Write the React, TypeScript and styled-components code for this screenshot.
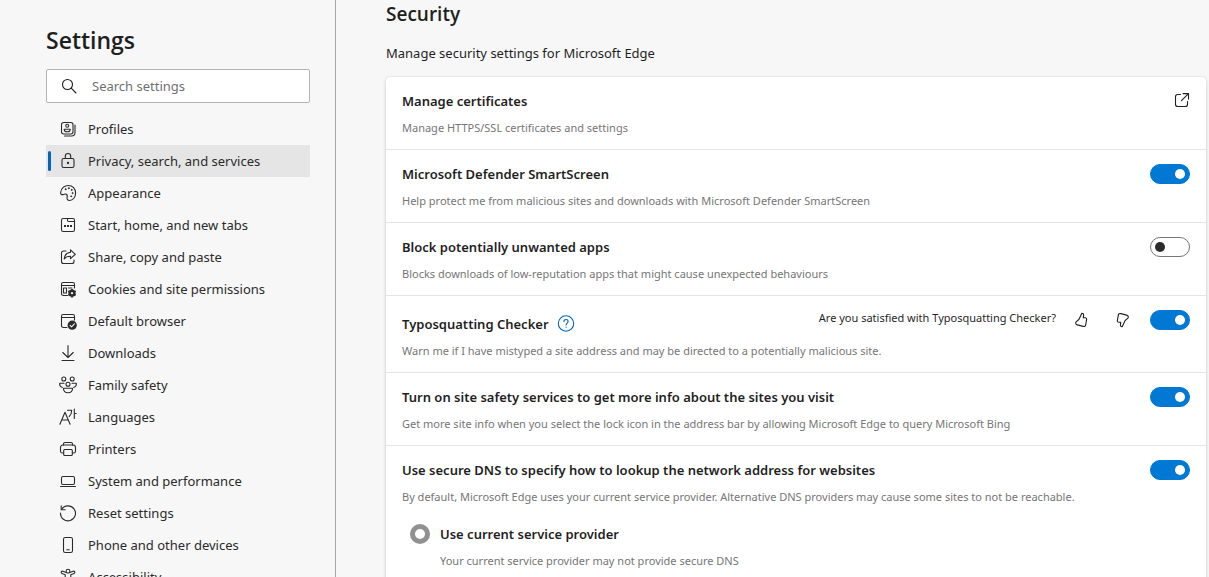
import React from "react";
import styled, { createGlobalStyle } from "styled-components";

const GlobalStyle = createGlobalStyle`
  *, *::before, *::after { box-sizing: border-box; }
  body {
    margin: 0;
    background: #f7f7f7;
    color: #1f1f1f;
    font-family: "Noto Sans", "Open Sans", sans-serif;
    font-size: 13px;
    line-height: 20px;
  }
  h1, h2, h3, p { margin: 0; }
  h1, h2 { font-family: "Open Sans", "Noto Sans", sans-serif; }
`;

const Page = styled.div`
  display: flex;
  height: 100vh;
  overflow: hidden;
`;

const Sidebar = styled.aside`
  flex: 0 0 336px;
  padding: 24px 25px 0 46px;
  border-right: 1px solid #a6a6a6;
`;

const SidebarTitle = styled.h1`
  font-size: 23px;
  font-weight: 600;
  line-height: 32px;
`;

const SearchBox = styled.label`
  display: flex;
  align-items: center;
  gap: 14px;
  height: 34px;
  margin: 13px 0 10px;
  padding: 0 14px;
  border: 1px solid #b3b3b3;
  border-radius: 2px;
  background: #fff;
`;

const SearchInput = styled.input`
  flex: 1;
  min-width: 0;
  padding: 0;
  border: 0;
  outline: 0;
  background: transparent;
  color: inherit;
  font: inherit;
  &::placeholder { color: #6f6f6f; opacity: 1; }
`;

const NavList = styled.ul`
  margin: 0;
  padding: 0;
  list-style: none;
`;

const NavLink = styled.a<{ $active?: boolean }>`
  display: flex;
  align-items: center;
  gap: 11px;
  height: 32px;
  color: #2b2b2b;
  text-decoration: none;
  background: ${(p) => (p.$active ? "#e5e5e5" : "transparent")};
  &::before {
    content: "";
    width: 3px;
    height: 20px;
    margin: 0 -3px 0 2px;
    border-radius: 2px;
    background: ${(p) => (p.$active ? "#0067b8" : "transparent")};
  }
`;

const Glyph = styled.svg`
  flex: none;
  display: block;
  fill: none;
  stroke: currentColor;
  stroke-width: 1.1;
  stroke-linecap: round;
  stroke-linejoin: round;
`;

const Main = styled.main`
  flex: 1;
  min-width: 0;
  padding: 2px 3px 0 50px;
`;

const SectionTitle = styled.h2`
  font-size: 19px;
  font-weight: 600;
  line-height: 24px;
`;

const SectionText = styled.p`
  margin: 17px 0 14px;
`;

const Card = styled.div`
  border-radius: 4px;
  background: #fff;
  box-shadow: 0 0 2px rgba(0, 0, 0, 0.16), 0 2px 4px rgba(0, 0, 0, 0.12);
`;

const Row = styled.section`
  padding: 14px 16px 13px;
  &:not(:last-child) { border-bottom: 1px solid #e5e5e5; }
`;

const RowHeader = styled.div`
  display: flex;
  align-items: flex-start;
  justify-content: space-between;
`;

const RowTitle = styled.h3<{ $spaced?: boolean }>`
  display: flex;
  align-items: center;
  gap: 9px;
  padding-top: ${(p) => (p.$spaced ? "4px" : "0")};
  height: ${(p) => (p.$spaced ? "24px" : "20px")};
  font-size: 13px;
  font-weight: 600;
  line-height: 20px;
`;

const RowDescription = styled.p`
  margin-top: 9px;
  color: #767676;
  font-size: 11px;
  line-height: 16px;
`;

const Controls = styled.div`
  display: flex;
  align-items: center;
  flex: none;
  height: 20px;
`;

const Question = styled.span`
  margin: 0 17px 4px 0;
  font-size: 11px;
  line-height: 16px;
`;

const IconButton = styled.button<{ $gap?: number }>`
  display: flex;
  align-items: center;
  justify-content: center;
  width: 16px;
  height: 16px;
  margin: 0 ${(p) => p.$gap ?? 0}px 0 0;
  padding: 0;
  border: 0;
  background: none;
  color: #1f1f1f;
  cursor: pointer;
`;

const HelpButton = styled(IconButton)`
  color: #0067b8;
`;

const Toggle = styled.input`
  appearance: none;
  display: flex;
  align-items: center;
  width: 40px;
  height: 20px;
  margin: 0;
  padding: 0 4px;
  border: 1px solid #767676;
  border-radius: 10px;
  background: #fff;
  cursor: pointer;
  &::before {
    content: "";
    width: 10px;
    height: 10px;
    border-radius: 50%;
    background: #2b2b2b;
  }
  &:checked {
    justify-content: flex-end;
    border-color: #0078d4;
    background: #0078d4;
  }
  &:checked::before { background: #fff; }
`;

const RadioOption = styled.label`
  display: flex;
  align-items: flex-start;
  gap: 10px;
  margin: 19px 0 0 8px;
`;

const RadioTitle = styled.span`
  display: block;
  font-weight: 600;
`;

const Radio = styled.input`
  appearance: none;
  flex: none;
  width: 20px;
  height: 20px;
  margin: 0;
  border: 5px solid #919191;
  border-radius: 50%;
  background: #fff;
`;

const RadioDescription = styled(RowDescription).attrs({ as: "span" })`
  display: block;
`;

const icons: Record<string, React.ReactNode> = {
  profiles: (
    <>
      <rect x="2.5" y="2.5" width="11.5" height="11.5" rx="2.2" />
      <path d="M16 5v7.5a3.5 3.5 0 0 1-3.5 3.5H5.5" />
      <circle cx="8.2" cy="5.8" r="1.5" />
      <path d="M5.2 9.2h6v.6c0 1.2-1.3 2-3 2s-3-.8-3-2z" />
    </>
  ),
  privacy: (
    <>
      <rect x="3" y="6.5" width="12" height="9" rx="1.6" />
      <path d="M6.3 6.5V4.200a2.700 2.700 0 0 1 5.400 0v2.300" />
      <circle cx="9" cy="11" r=".6" fill="currentColor" />
    </>
  ),
  appearance: (
    <>
      <path d="M1.6 8.6C2 4.2 5.4 1.5 9.4 1.5c4.2 0 7.2 3.3 7.2 7.3 0 4.3-2.6 7.7-6 7.7-2 0-2.8-1.3-2.5-2.9.4-1.9.2-3.3-1.2-3.6-1.1-.2-1.7.6-2.8.6-1.6.1-2.7-.5-2.5-2z" />
      {[[6.6, 5.2], [9.8, 4.2], [12.6, 5.9], [13.5, 9.1], [12.1, 12.3]].map(([x, y]) => (
        <circle key={x} cx={x} cy={y} r=".6" fill="currentColor" strokeWidth=".6" />
      ))}
    </>
  ),
  start: (
    <>
      <rect x="2.5" y="2.5" width="13" height="13" rx="1.8" />
      <path d="M8.5 2.5v1.800c0 .7.4 1.200 1.100 1.200h5.900" />
      <path d="M5 10h2M8 10h2M11 10h2" strokeWidth="2" strokeLinecap="butt" />
    </>
  ),
  share: (
    <>
      <path d="M7 3H4.500a2 2 0 0 0-2 2v8.500a2 2 0 0 0 2 2H13a2 2 0 0 0 2-2V12" />
      <path d="M11.500 1.800l4.800 4.500-4.800 4.400V8.300C8.600 8.200 6.700 9 5.200 11c.3-3.500 2.500-6.300 6.300-6.700z" />
    </>
  ),
  cookies: (
    <>
      <path d="M8.500 15.500H4.300a1.800 1.800 0 0 1-1.800-1.800V4.300c0-1 .8-1.800 1.800-1.800h9.400c1 0 1.800.8 1.800 1.800V8M2.500 5.500h13" />
      <path d="M4.500 8h3v5h-3zM9.500 8h3.500" />
      <circle cx="13" cy="13.200" r="2.500" strokeWidth="2.200" />
      <path d="M13 8.900v8.600M9.300 11.100l7.400 4.200M9.300 15.300l7.400-4.200" strokeWidth="1.700" strokeLinecap="butt" />
      <circle cx="13" cy="13.200" r="1.100" fill="#f7f7f7" stroke="none" />
    </>
  ),
  browser: (
    <>
      <path d="M8 15.500H4.300a1.800 1.800 0 0 1-1.800-1.800V4.300c0-1 .8-1.800 1.800-1.800h9.400c1 0 1.800.8 1.800 1.800V8M2.500 5.500h13" />
      <circle cx="13.200" cy="13.200" r="4.600" fill="currentColor" stroke="none" />
      <path d="M11.100 13.400l1.500 1.500 2.800-3" stroke="#f7f7f7" />
    </>
  ),
  downloads: <path d="M9 1.500v11.800M3.800 8.500L9 13.500l5.200-5M3 16.500h12" />,
  family: (
    <>
      <circle cx="4.800" cy="3" r="2" />
      <circle cx="13.200" cy="3" r="2" />
      <circle cx="9" cy="8.200" r="2" />
      <path d="M5 7.200H.8c-.4 2 .6 3.700 2.500 4.300M13 7.200h4.200c.4 2-.6 3.700-2.500 4.300" />
      <path d="M4.500 12.200h9c.3 2.800-1.700 4.600-4.500 4.600s-4.800-1.800-4.500-4.600z" />
    </>
  ),
  languages: (
    <>
      <path d="M.9 16.300L6 4.200l5.100 12.100M2.800 12h6.500" />
      <path d="M8.500 2.300h4.200c0 2.800-.8 4.700-2.500 6.200M15.300 1v9.500M15.300 5.500h1.900" />
    </>
  ),
  printers: (
    <>
      <path d="M4.500 5V4c0-.8.700-1.500 1.500-1.500h6c.8 0 1.500.7 1.500 1.500v1" />
      <path d="M4.500 13H3.300a1.800 1.800 0 0 1-1.800-1.800V7.500A2.500 2.500 0 0 1 4 5h10a2.500 2.500 0 0 1 2.500 2.500v3.700c0 1-.8 1.800-1.800 1.800h-1.200" />
      <rect x="4.700" y="9.500" width="8.600" height="6" rx="1" />
    </>
  ),
  system: (
    <>
      <rect x="2.500" y="4.500" width="13" height="8" rx="1.500" />
      <path d="M1.500 14.500h15" />
    </>
  ),
  reset: (
    <>
      <path d="M2.700 5.300A7.500 7.500 0 1 1 1.500 9" />
      <path d="M2.200 1.700v4h4" />
    </>
  ),
  phone: (
    <>
      <rect x="4.500" y="1.500" width="9" height="15" rx="1.800" />
      <path d="M7.800 13.700h2.400" />
    </>
  ),
  accessibility: (
    <>
      <circle cx="9" cy="3.200" r="1.900" />
      <path d="M7.200 4.600L3.900 3.200C2.300 2.700 1.500 4.700 3 5.400l3.200 1.400v2.700l-1.700 5c-.4 1.600 1.500 2.200 2.100.8L9 10.800l2.400 4.500c.6 1.400 2.500.8 2.100-.8l-1.700-5V6.800L15 5.400c1.500-.7.700-2.700-.9-2.200l-3.300 1.400" />
    </>
  ),
};

const navItems = [
  ["profiles", "Profiles"],
  ["privacy", "Privacy, search, and services"],
  ["appearance", "Appearance"],
  ["start", "Start, home, and new tabs"],
  ["share", "Share, copy and paste"],
  ["cookies", "Cookies and site permissions"],
  ["browser", "Default browser"],
  ["downloads", "Downloads"],
  ["family", "Family safety"],
  ["languages", "Languages"],
  ["printers", "Printers"],
  ["system", "System and performance"],
  ["reset", "Reset settings"],
  ["phone", "Phone and other devices"],
  ["accessibility", "Accessibility"],
];

function ToggleRow(props: {
  id: string;
  title: string;
  description: string;
  on?: boolean;
  help?: boolean;
  before?: React.ReactNode;
  children?: React.ReactNode;
}) {
  return (
    <Row>
      <RowHeader>
        <RowTitle $spaced={props.help}>
          <label htmlFor={props.id}>{props.title}</label>
          {props.help && (
            <HelpButton type="button" aria-label="Help">
              <Glyph width="18" height="18" viewBox="0 0 18 18">
                <circle cx="9" cy="8.500" r="7.700" />
                <path d="M6.900 6.600c0-1.300.9-2.100 2.100-2.100s2.100.8 2.100 1.900c0 1.500-2 1.800-2 3.500M9.100 12.100v.2" />
              </Glyph>
            </HelpButton>
          )}
        </RowTitle>
        <Controls>
          {props.before}
          <Toggle id={props.id} type="checkbox" role="switch" defaultChecked={props.on} />
        </Controls>
      </RowHeader>
      <RowDescription>{props.description}</RowDescription>
      {props.children}
    </Row>
  );
}

const thumb =
  "M8.800 1.300c1.300 0 2 .9 1.800 2.200l-.4 2.200h1.900c1.100 0 1.700.8 1.500 1.900l-.9 5.200c-.2 1.300-1.100 1.900-2.400 1.600l-6-1.500c-.9-.2-1.400-.7-1.600-1.500-.2-1 .2-1.700 1.100-2.200 1.900-1 2.800-2.400 3.500-4.700z";

export default function App() {
  return (
    <>
      <GlobalStyle />
      <Page>
        <Sidebar>
          <SidebarTitle>Settings</SidebarTitle>
          <SearchBox>
            <Glyph width="17" height="17" viewBox="0 0 17 17">
              <circle cx="6.500" cy="6.500" r="5" />
              <path d="M10.200 10.200l4.800 4.800" />
            </Glyph>
            <SearchInput type="text" placeholder="Search settings" aria-label="Search settings" />
          </SearchBox>
          <nav>
            <NavList>
              {navItems.map(([icon, label]) => (
                <li key={icon}>
                  <NavLink href="#" $active={icon === "privacy"}>
                    <Glyph width="18" height="18" viewBox="0 0 18 18">
                      {icons[icon]}
                    </Glyph>
                    {label}
                  </NavLink>
                </li>
              ))}
            </NavList>
          </nav>
        </Sidebar>
        <Main>
          <SectionTitle>Security</SectionTitle>
          <SectionText>Manage security settings for Microsoft Edge</SectionText>
          <Card>
            <Row>
              <RowHeader>
                <RowTitle>Manage certificates</RowTitle>
                <Controls>
                  <IconButton type="button" aria-label="Open certificates">
                    <Glyph width="16" height="16" viewBox="0 0 16 16">
                      <path d="M6.500 1.500H3.800a2.300 2.300 0 0 0-2.300 2.300v7.400a2.300 2.300 0 0 0 2.300 2.300h7.400a2.300 2.300 0 0 0 2.300-2.300V8.500" />
                      <path d="M9 .6h5.500v5.500M14.500.6L7.500 7.600" />
                    </Glyph>
                  </IconButton>
                </Controls>
              </RowHeader>
              <RowDescription>Manage HTTPS/SSL certificates and settings</RowDescription>
            </Row>
            <ToggleRow
              id="smartscreen"
              title="Microsoft Defender SmartScreen"
              description="Help protect me from malicious sites and downloads with Microsoft Defender SmartScreen"
              on
            />
            <ToggleRow
              id="unwanted"
              title="Block potentially unwanted apps"
              description="Blocks downloads of low-reputation apps that might cause unexpected behaviours"
            />
            <ToggleRow
              id="typosquatting"
              title="Typosquatting Checker"
              description="Warn me if I have mistyped a site address and may be directed to a potentially malicious site."
              on
              help
              before={
                <>
                  <Question>Are you satisfied with Typosquatting Checker?</Question>
                  <IconButton type="button" aria-label="Yes" $gap={26}>
                    <Glyph width="16" height="16" viewBox="0 0 16 16">
                      <path d={thumb} />
                    </Glyph>
                  </IconButton>
                  <IconButton type="button" aria-label="No" $gap={19}>
                    <Glyph width="16" height="16" viewBox="0 0 16 16">
                      <path d={thumb} transform="rotate(180 8 8)" />
                    </Glyph>
                  </IconButton>
                </>
              }
            />
            <ToggleRow
              id="site-safety"
              title="Turn on site safety services to get more info about the sites you visit"
              description="Get more site info when you select the lock icon in the address bar by allowing Microsoft Edge to query Microsoft Bing"
              on
            />
            <ToggleRow
              id="secure-dns"
              title="Use secure DNS to specify how to lookup the network address for websites"
              description="By default, Microsoft Edge uses your current service provider. Alternative DNS providers may cause some sites to not be reachable."
              on
            >
              <RadioOption>
                <Radio type="radio" name="dns" defaultChecked />
                <span>
                  <RadioTitle>Use current service provider</RadioTitle>
                  <RadioDescription>Your current service provider may not provide secure DNS</RadioDescription>
                </span>
              </RadioOption>
            </ToggleRow>
          </Card>
        </Main>
      </Page>
    </>
  );
}
